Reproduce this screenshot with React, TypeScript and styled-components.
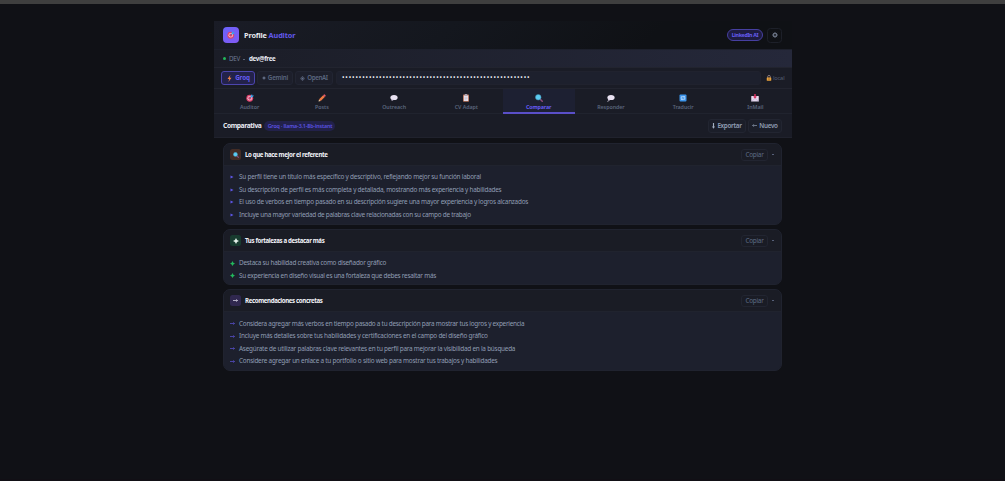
import React from "react";
import styled, { createGlobalStyle } from "styled-components";

const Global = createGlobalStyle`
  * { box-sizing: border-box; }
  html, body { margin: 0; background: #101116; }
  body { font-family: "Noto Sans", "Open Sans", sans-serif; font-size: 6px; color: #e8eaf2; overflow: hidden; }
`;

const Page = styled.div`
  height: 481px;
  display: flex;
  flex-direction: column;
  align-items: center;
  border-top: 4px solid #3f3f3f;
  border-bottom: 2px solid #110f15;
`;
const Panel = styled.main`
  width: 578px;
  margin-top: 17px;
  display: flex;
  flex-direction: column;
`;
const Row = styled.div`
  display: flex;
  align-items: center;
  flex: none;
`;
const Text = styled.span<{ $size?: number; $track?: number; $color?: string; $weight?: number }>`
  font-size: ${(p) => p.$size ?? 6}px;
  letter-spacing: ${(p) => p.$track ?? 0}px;
  color: ${(p) => p.$color ?? "#e8eaf2"};
  font-weight: ${(p) => p.$weight ?? 400};
  line-height: 10px;
  white-space: nowrap;
`;
const Header = styled(Row)`
  height: 29px;
  padding: 0 9.5px 0 9.5px;
  background: linear-gradient(135deg, #1a1c26 0%, #14171e 40%, #0f1115 75%);
  border-bottom: 1px solid #1d202c;
`;
const Logo = styled.div`
  width: 16px;
  height: 16px;
  border-radius: 4px;
  margin-right: 5px;
  display: grid;
  place-items: center;
  background: linear-gradient(135deg, #6a63fb, #8359f2);
`;
const Spacer = styled.div`
  flex: 1;
`;
const Badge = styled.div`
  height: 12px;
  width: 36px;
  border: 1px solid #463fa0;
  border-radius: 6px;
  background: #1e1c41;
  display: flex;
  align-items: center;
  justify-content: center;
  margin-right: 4px;
`;
const GearButton = styled.div`
  width: 15px;
  height: 15px;
  border: 1px solid #1d2029;
  border-radius: 3.5px;
  display: grid;
  place-items: center;
`;
const UserBar = styled(Row)`
  height: 18px;
  padding: 0 9.5px;
  background: linear-gradient(90deg, #1b1d27, #25283a);
  border-bottom: 1px solid #22242f;
`;
const Dot = styled.i`
  width: 3px;
  height: 3px;
  border-radius: 50%;
  background: #22b85c;
  margin-right: 3px;
`;
const Separator = styled.i`
  width: 2px;
  height: 1px;
  margin: 1px 3.5px 0 3.5px;
  background: #5a6479;
`;
const Providers = styled(Row)`
  height: 21px;
  padding: 0 7px 0 7.5px;
  background: #1a1c26;
  border-bottom: 1px solid #22242f;
`;
const Provider = styled.div<{ $w: number; $on?: boolean }>`
  width: ${(p) => p.$w}px;
  height: 14px;
  margin-right: 2px;
  border: 1px solid ${(p) => (p.$on ? "#4c45ae" : "#222532")};
  border-radius: 3px;
  background: ${(p) => (p.$on ? "#23224a" : "#1d1f2b")};
  display: flex;
  align-items: center;
  justify-content: center;
  gap: 2px;
`;
const KeyField = styled.div`
  width: 425px;
  height: 14px;
  margin-left: 1px;
  border: 1px solid #20222e;
  border-radius: 3px;
  background: #1d202d;
  display: flex;
  align-items: center;
  padding-left: 5px;
`;
const Tabs = styled(Row)`
  height: 25px;
  background: #1a1c26;
  border-bottom: 1px solid #20232e;
`;
const Tab = styled.div<{ $on?: boolean }>`
  flex: 1;
  height: 25px;
  display: flex;
  flex-direction: column;
  align-items: center;
  padding-top: 5px;
  background: ${(p) => (p.$on ? "#1d2032" : "transparent")};
  border-bottom: ${(p) => (p.$on ? "2px solid #5a4fc8" : "0")};
`;
const TabIcon = styled.div`
  height: 8px;
  display: grid;
  place-items: center;
`;
const ResultBar = styled(Row)`
  height: 24px;
  padding: 0 9.5px 0 9.5px;
  background: #1a1c26;
  border-bottom: 1px solid #20222d;
`;
const Model = styled.div`
  height: 10px;
  width: 71px;
  margin-left: 3px;
  border-radius: 5px;
  background: #22214a;
  display: flex;
  align-items: center;
  justify-content: center;
`;
const Button = styled.div<{ $w: number; $ghost?: boolean }>`
  width: ${(p) => p.$w}px;
  height: ${(p) => (p.$ghost ? 12 : 14)}px;
  border: 1px solid #222531;
  border-radius: 3px;
  background: ${(p) => (p.$ghost ? "transparent" : "#1b1e29")};
  display: flex;
  align-items: center;
  justify-content: center;
  gap: 2px;
`;
const Actions = styled.div`
  display: flex;
  gap: 2px;
`;
const Results = styled.div`
  padding: 5px 9.5px 0 9.5px;
  display: flex;
  flex-direction: column;
  gap: 4px;
`;
const Card = styled.section<{ $h: number }>`
  height: ${(p) => p.$h}px;
  border: 1px solid #20232f;
  border-radius: 7px;
  background: #1d202d;
  overflow: hidden;
`;
const CardHead = styled(Row)`
  height: 22px;
  padding: 0 5px 0 6px;
  background: #1a1c25;
  border-bottom: 1px solid #20232e;
`;
const CardIcon = styled.div<{ $bg: string }>`
  width: 11px;
  height: 11px;
  border-radius: 2.5px;
  margin-right: 4px;
  background: ${(p) => p.$bg};
  display: grid;
  place-items: center;
`;
const Caret = styled.i`
  width: 2px;
  height: 1px;
  background: #566079;
  margin: 0 2px 1px 4px;
`;
const List = styled.ul`
  margin: 0;
  padding: 5px 6px 0;
  list-style: none;
`;
const Item = styled.li`
  height: 12.6px;
  display: flex;
  align-items: center;
`;
const Mark = styled.span`
  width: 9px;
  display: flex;
  align-items: center;
`;

const Svg = ({ s = 8, children }: { s?: number; children: React.ReactNode }) => (
  <svg width={s} height={s} viewBox="0 0 16 16">{children}</svg>
);
const Target = ({ s }: { s?: number }) => (
  <Svg s={s}>
    <circle cx="7.5" cy="8.5" r="6.8" fill="#e0406a" />
    <circle cx="7.5" cy="8.5" r="4.6" fill="#e9c3d4" />
    <circle cx="7.5" cy="8.5" r="2.8" fill="#e0406a" />
    <path d="M7.5 8.5 L12 4" stroke="#3b7fb8" strokeWidth="1.6" />
    <path d="M9.5 6.5 V2.8 L12.3 0 V3.2 H16 L13 6.5Z" fill="#36a4e8" />
  </Svg>
);
const Pencil = () => (
  <Svg>
    <path d="M1 15 L2.2 10.5 L5.5 13.8Z" fill="#e9c49a" />
    <path d="M2.2 10.5 L10.2 2.5 L13.5 5.8 L5.5 13.8Z" fill="#f07a42" />
    <path d="M10.2 2.5 L12 .9 Q13 .3 14 1.3 L15 2.3 Q15.8 3.3 15 4.3 L13.5 5.8Z" fill="#e5596b" />
  </Svg>
);
const Bubble = ({ thought }: { thought?: boolean }) => (
  <Svg>
    <ellipse cx="8" cy="7" rx="7.2" ry="5.2" fill="#e9e2f2" />
    {thought ? (
      <>
        <circle cx="3.8" cy="11.6" r="2" fill="#d8cfe4" />
        <circle cx="1.8" cy="14.3" r="1" fill="#d8cfe4" />
      </>
    ) : (
      <path d="M3 10 L3.4 14 L8 11.5Z" fill="#d3c8e2" />
    )}
  </Svg>
);
const Clipboard = () => (
  <Svg>
    <rect x="2" y="1" width="12" height="14.5" rx="1.5" fill="#b9735a" />
    <rect x="3.8" y="3" width="8.4" height="11" fill="#e9e4ef" />
    <rect x="5.5" y="0" width="5" height="3.4" rx="1" fill="#a9a3b4" />
    <path d="M5 6.5H11M5 9H11M5 11.5H9" stroke="#aca5bd" strokeWidth=".8" />
  </Svg>
);
const Lens = ({ s }: { s?: number }) => (
  <Svg s={s}>
    <path d="M10 10 L14.5 14.5" stroke="#8d4a78" strokeWidth="3" strokeLinecap="round" />
    <circle cx="6.5" cy="6.5" r="5.6" fill="#5ccbf2" stroke="#3f88a8" strokeWidth="1" />
  </Svg>
);
const Refresh = () => (
  <Svg>
    <rect x="1" y="1" width="14" height="14" rx="2" fill="#3b93ea" />
    <path d="M4.5 9.5V5.5H10.5M11.5 6.5V10.5H5.5" stroke="#dcecff" strokeWidth="1.4" fill="none" />
    <path d="M9.5 3.5 L12 5.5 L9.5 7.5ZM6.5 8.5 L4 10.5 L6.5 12.5Z" fill="#dcecff" />
  </Svg>
);
const Mail = () => (
  <Svg>
    <rect x="0.5" y="4" width="15" height="11" rx="1" fill="#e6d9ef" />
    <path d="M.8 14.5 L8 9 L15.2 14.5" stroke="#bda9cf" strokeWidth="1" fill="none" />
    <path d="M6.5 0 H9.5 V5 H12 L8 9.5 L4 5 H6.5Z" fill="#d9305f" />
  </Svg>
);
const Bolt = () => (
  <Svg s={7}>
    <path d="M10 0 L3.5 9 H7.5 L5.5 16 L12.5 6.5 H8.5Z" fill="#f28545" />
  </Svg>
);
const Star = ({ c, s = 6 }: { c: string; s?: number }) => (
  <Svg s={s}>
    <path d="M8 0 L10.8 5.2 L16 8 L10.8 10.8 L8 16 L5.2 10.8 L0 8 L5.2 5.2Z" fill={c} />
  </Svg>
);
const Ring = () => (
  <Svg s={5}>
    <path d="M8 1 L15 8 L8 15 L1 8Z" fill="none" stroke="#66728b" strokeWidth="2" />
    <circle cx="8" cy="8" r="3.6" fill="#66728b" />
  </Svg>
);
const Gear = () => (
  <Svg s={6}>
    <circle cx="8" cy="8" r="5" fill="none" stroke="#8791a6" strokeWidth="2.4" />
    <circle cx="8" cy="8" r="1.6" fill="#8791a6" />
    <path d="M8 0V3M8 13V16M0 8H3M13 8H16M2.3 2.3L4.4 4.4M11.6 11.6L13.7 13.7M13.7 2.3L11.6 4.4M4.4 11.6L2.3 13.7" stroke="#8791a6" strokeWidth="1.2" />
  </Svg>
);
const Lock = () => (
  <Svg s={6}>
    <path d="M4.5 8V4.5A3.5 3.5 0 0 1 11.5 4.5V8" fill="none" stroke="#a28e92" strokeWidth="2" />
    <rect x="2" y="6.5" width="12" height="9" rx="1.5" fill="#e9a13b" />
    <rect x="7" y="9" width="2" height="4" fill="#704825" />
  </Svg>
);
const Arrow = ({ c, s = 6 }: { c: string; s?: number }) => (
  <Svg s={s}>
    <path d="M0 8H14M10.5 4.5L14.5 8L10.5 11.5" fill="none" stroke={c} strokeWidth="2.4" />
  </Svg>
);
const BackArrow = () => (
  <Svg s={5}>
    <path d="M16 8H2M6 4L2 8L6 12" fill="none" stroke="#8d9ab0" strokeWidth="2.2" />
  </Svg>
);
const DownArrow = () => (
  <svg width="3" height="6" viewBox="0 0 8 16">
    <path d="M2.5 0H5.5V9H8L4 15L0 9H2.5Z" fill="#a3afc2" />
  </svg>
);
const Bullet = () => (
  <Svg s={4}>
    <path d="M2 2 L14 8 L2 14Z" fill="#5f57ea" />
  </Svg>
);

const tabs: [string, React.ReactNode][] = [
  ["Auditor", <Target />],
  ["Posts", <Pencil />],
  ["Outreach", <Bubble />],
  ["CV Adapt", <Clipboard />],
  ["Comparar", <Lens />],
  ["Responder", <Bubble thought />],
  ["Traducir", <Refresh />],
  ["InMail", <Mail />],
];

type CardData = {
  title: string; h: number; bg: string;
  icon: React.ReactNode; mark: React.ReactNode; items: [string, number][];
};
const cards: CardData[] = [
  {
    title: "Lo que hace mejor el referente", h: 82, bg: "#432c25",
    icon: <Lens s={6} />, mark: <Bullet />,
    items: [
      ["Su perfil tiene un título más específico y descriptivo, reflejando mejor su función laboral", -0.225],
      ["Su descripción de perfil es más completa y detallada, mostrando más experiencia y habilidades", -0.24],
      ["El uso de verbos en tiempo pasado en su descripción sugiere una mayor experiencia y logros alcanzados", -0.241],
      ["Incluye una mayor variedad de palabras clave relacionadas con su campo de trabajo", -0.254],
    ],
  },
  {
    title: "Tus fortalezas a destacar más", h: 56.4, bg: "#183b2f",
    icon: <Star c="#e4f2ea" s={6} />, mark: <Star c="#22b85c" s={5} />,
    items: [
      ["Destaca su habilidad creativa como diseñador gráfico", -0.25],
      ["Su experiencia en diseño visual es una fortaleza que debes resaltar más", -0.249],
    ],
  },
  {
    title: "Recomendaciones concretas", h: 82, bg: "#30284f",
    icon: <Arrow c="#dcd8ea" s={5} />, mark: <Arrow c="#5a50cc" s={5} />,
    items: [
      ["Considera agregar más verbos en tiempo pasado a tu descripción para mostrar tus logros y experiencia", -0.252],
      ["Incluye más detalles sobre tus habilidades y certificaciones en el campo del diseño gráfico", -0.23],
      ["Asegúrate de utilizar palabras clave relevantes en tu perfil para mejorar la visibilidad en la búsqueda", -0.234],
      ["Considere agregar un enlace a tu portfolio o sitio web para mostrar tus trabajos y habilidades", -0.232],
    ],
  },
];

export default function App() {
  return (
    <>
      <Global />
      <Page>
        <Panel>
          <Header>
            <Logo><Target s={8} /></Logo>
            <Text $size={7.3} $weight={700} $track={-0.13}>
              Profile <Text as="b" $size={7.3} $weight={700} $track={-0.13} $color="#6259ec">Auditor</Text>
            </Text>
            <Spacer />
            <Badge><Text $size={5.3} $weight={700} $track={-0.35} $color="#655cf0">LinkedIn AI</Text></Badge>
            <GearButton><Gear /></GearButton>
          </Header>
          <UserBar>
            <Dot />
            <Text $color="#6f7b94" $size={6.3} $track={-0.3}>DEV</Text>
            <Separator />
            <Text $weight={700} $size={6.2} $track={-0.32}>dev@free</Text>
          </UserBar>
          <Providers>
            <Provider $w={34} $on><Bolt /><Text $weight={700} $track={-0.15} $size={6.3} $color="#655cf5">Groq</Text></Provider>
            <Provider $w={36}><Star c="#66728b" s={4} /><Text $weight={600} $size={6.2} $track={-0.2} $color="#5b6780">Gemini</Text></Provider>
            <Provider $w={38}><Ring /><Text $weight={600} $size={6.2} $track={-0.35} $color="#5b6780">OpenAI</Text></Provider>
            <KeyField><Text $size={6.6} $track={0.886} $color="#f4f5f9">{"•".repeat(56)}</Text></KeyField>
            <Spacer />
            <Lock />
            <Text $size={5.6} $track={-0.1} $color="#566076">&nbsp;local</Text>
          </Providers>
          <Tabs>
            {tabs.map(([name, icon], i) => (
              <Tab key={name} $on={i === 4}>
                <TabIcon>{icon}</TabIcon>
                <Text $size={5.3} $weight={i === 4 ? 700 : 600} $track={i === 4 ? -0.12 : -0.04} $color={i === 4 ? "#655cf5" : "#5b667d"}>{name}</Text>
              </Tab>
            ))}
          </Tabs>
          <ResultBar>
            <Text $size={6.7} $weight={700} $track={-0.4}>Comparativa</Text>
            <Model><Text $size={5.3} $weight={600} $track={-0.14} $color="#5c53e2">Groq · llama-3.1-8b-instant</Text></Model>
            <Spacer />
            <Actions>
              <Button $w={38}><DownArrow /><Text $weight={600} $size={6.3} $track={-0.3} $color="#929fb5">Exportar</Text></Button>
              <Button $w={34}><BackArrow /><Text $weight={600} $size={6.3} $track={-0.3} $color="#929fb5">Nuevo</Text></Button>
            </Actions>
          </ResultBar>
          <Results>
            {cards.map((c) => (
              <Card key={c.title} $h={c.h}>
                <CardHead>
                  <CardIcon $bg={c.bg}>{c.icon}</CardIcon>
                  <Text $size={6.1} $weight={700} $track={-0.35} $color="#f2f3f9">{c.title}</Text>
                  <Spacer />
                  <Button $w={27} $ghost><Text $size={6.4} $track={-0.25} $color="#5f6c86">Copiar</Text></Button>
                  <Caret />
                </CardHead>
                <List>
                  {c.items.map(([t, track]) => (
                    <Item key={t}>
                      <Mark>{c.mark}</Mark>
                      <Text $size={6.4} $color="#909db3" $track={track}>{t}</Text>
                    </Item>
                  ))}
                </List>
              </Card>
            ))}
          </Results>
        </Panel>
      </Page>
    </>
  );
}
